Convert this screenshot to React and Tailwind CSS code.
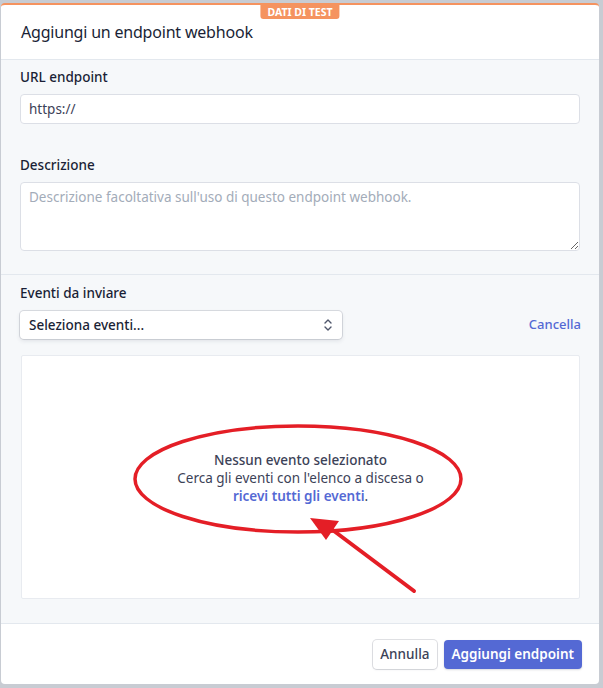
import React from 'react'

const font = { fontFamily: '"Noto Sans", "Open Sans", sans-serif' }

export default function App() {
	return (
		<div className="relative w-[603px] h-[688px] bg-[#c8ccd3] pt-[3px] pl-[1px] pr-[4px] pb-[4px] overflow-hidden" style={font}>
			<div className="relative h-full flex flex-col bg-white rounded-[4px] border-t-2 border-[#f5935f] overflow-hidden">
				{/* test data badge */}
				<div className="absolute top-0 left-1/2 -translate-x-1/2 bg-[#f5935f] text-white text-[10.5px] font-bold leading-[14px] px-[7px] rounded-b-[3px]">
					DATI DI TEST
				</div>

				<div className="h-[55px] flex items-center px-[20px] border-b border-[#e3e8ee]">
					<h1 className="text-[16px] text-[#1a1f36] tracking-[-0.2px]">Aggiungi un endpoint webhook</h1>
				</div>

				<div className="flex-1 flex flex-col bg-[#f6f8fa]">
					<div className="px-[19px] pt-[7px] pb-[23px] border-b border-[#e3e8ee]">
						<label className="block text-[13.5px] font-medium text-[#1a1f36] leading-[20px]">URL endpoint</label>
						<div className="mt-[7px] h-[30px] bg-white border border-[#dcdfe6] rounded-[4px] flex items-center px-[8px] text-[13.5px] text-[#3c4257]">
							https://
						</div>
						<label className="block mt-[31px] text-[13.5px] font-medium text-[#1a1f36] leading-[20px]">Descrizione</label>
						<textarea
							className="mt-[7px] block w-full h-[69px] bg-white border border-[#dcdfe6] rounded-[4px] px-[8px] py-[4px] text-[13.5px] text-[#3c4257] placeholder:text-[#a3acb9] outline-none"
							placeholder="Descrizione facoltativa sull'uso di questo endpoint webhook."
							style={font}
						/>
					</div>

					<div className="flex-1 flex flex-col px-[19px] pt-[8px] pb-[24px] border-b border-[#e3e8ee]">
						<label className="block text-[13.5px] font-medium text-[#1a1f36] leading-[20px]">Eventi da inviare</label>
						<div className="mt-[8px] flex items-center justify-between">
							<div className="w-[322px] h-[28px] bg-white rounded-[4px] shadow-[0_0_0_1px_rgba(60,66,87,0.16),0_2px_4px_rgba(60,66,87,0.12)] flex items-center justify-between px-[9px] text-[13.5px] font-medium text-[#1a1f36]">
								<span>Seleziona eventi...</span>
								<svg width="10" height="14" viewBox="0 0 10 14" fill="none" stroke="#4f566b" strokeWidth="1.4" strokeLinecap="round" strokeLinejoin="round">
									<path d="M2 5l3-3 3 3" />
									<path d="M2 9l3 3 3-3" />
								</svg>
							</div>
							<span className="text-[13px] font-medium text-[#5469d4] -mr-[1px]">Cancella</span>
						</div>
						<div className="mt-[16px] flex-1 ml-[1px] bg-white border border-[#e8ebf0] rounded-[2px] flex flex-col items-center justify-center text-[13.5px] leading-[18px] text-[#3c4257] pt-[2px]">
							<div className="font-medium">Nessun evento selezionato</div>
							<div>Cerca gli eventi con l'elenco a discesa o</div>
							<div>
								<span className="font-semibold text-[#5469d4]">ricevi tutti gli eventi</span>.
							</div>
						</div>
					</div>
				</div>

				<div className="h-[60px] flex items-center justify-end gap-[7px] pl-[18px] pr-[17px]">
					<button className="h-[29px] px-[7px] bg-white rounded-[4px] text-[13.5px] font-medium text-[#3c4257] shadow-[0_0_0_1px_rgba(60,66,87,0.16),0_1px_2px_rgba(60,66,87,0.1)]">
						Annulla
					</button>
					<button className="h-[29px] px-[8px] bg-[#5469d4] rounded-[4px] text-[13.5px] font-semibold text-white shadow-[0_1px_2px_rgba(60,66,87,0.2)]">
						Aggiungi endpoint
					</button>
				</div>
			</div>

			{/* red annotation */}
			<svg className="absolute inset-0 pointer-events-none" width="603" height="688" viewBox="0 0 603 688">
				<ellipse cx="298" cy="479" rx="163" ry="53" fill="none" stroke="#e41e26" strokeWidth="3.5" />
				<line x1="414" y1="591" x2="330" y2="528" stroke="#e41e26" strokeWidth="4" strokeLinecap="round" />
				<polygon points="310,518 339,521 326,540" fill="#e41e26" />
			</svg>
		</div>
	)
}
